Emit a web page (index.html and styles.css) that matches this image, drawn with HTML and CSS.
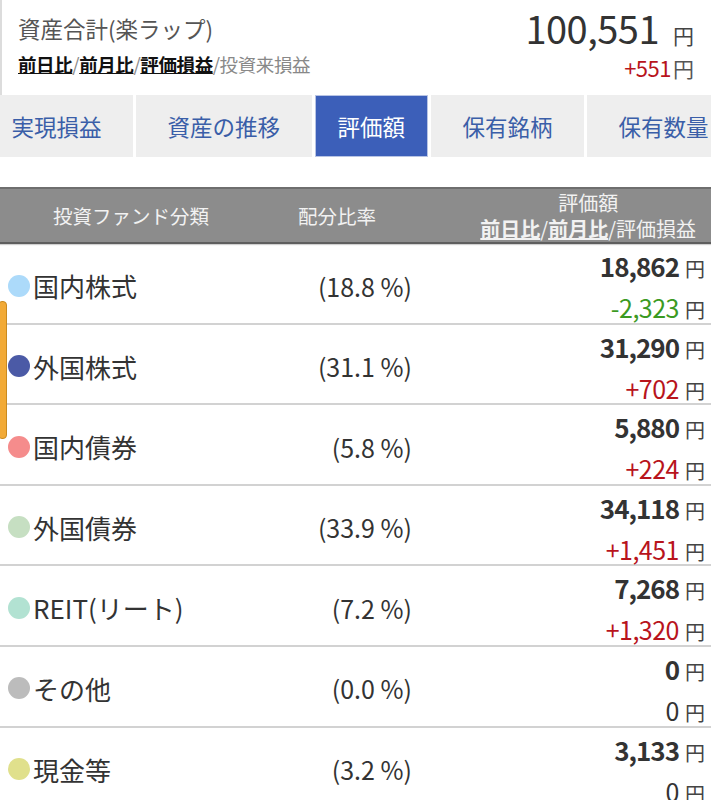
FILE: index.html
```html
<!DOCTYPE html>
<html lang="ja">
<head>
<meta charset="utf-8">
<link rel="stylesheet" href="styles.css">
</head>
<body>
<div class="page">
  <div class="summary">
    <div class="sum-left">
      <div class="sum-title">資産合計(楽ラップ)</div>
      <div class="sum-links"><span class="lk">前日比</span>/<span class="lk">前月比</span>/<span class="lk">評価損益</span>/<span class="muted">投資来損益</span></div>
    </div>
    <div class="sum-right">
      <div class="sum-total"><span class="big">100,551</span><span class="yen-m">円</span></div>
      <div class="sum-diff"><span class="plus">+551</span><span class="yen-s">円</span></div>
    </div>
  </div>

  <div class="tabs">
    <div class="tab first">実現損益</div>
    <div class="tab">資産の推移</div>
    <div class="tab active">評価額</div>
    <div class="tab">保有銘柄</div>
    <div class="tab">保有数量</div>
  </div>

  <div class="thead">
    <div class="th th-name">投資ファンド分類</div>
    <div class="th th-pct">配分比率</div>
    <div class="th th-amt">
      <div class="th-amt-inner">
        <div>評価額</div>
        <div><span class="ul">前日比</span>/<span class="ul">前月比</span>/評価損益</div>
      </div>
    </div>
  </div>

  <div class="rows">
    <div class="row">
      <div class="name"><span class="dot c1"></span>国内株式</div>
      <div class="pct">(18.8 %)</div>
      <div class="amt"><div class="val">18,862<span class="yen">円</span></div><div class="diff minus">-2,323<span class="yen">円</span></div></div>
    </div>
    <div class="row">
      <div class="name"><span class="dot c2"></span>外国株式</div>
      <div class="pct">(31.1 %)</div>
      <div class="amt"><div class="val">31,290<span class="yen">円</span></div><div class="diff plus">+702<span class="yen">円</span></div></div>
    </div>
    <div class="row">
      <div class="name"><span class="dot c3"></span>国内債券</div>
      <div class="pct">(5.8 %)</div>
      <div class="amt"><div class="val">5,880<span class="yen">円</span></div><div class="diff plus">+224<span class="yen">円</span></div></div>
    </div>
    <div class="row">
      <div class="name"><span class="dot c4"></span>外国債券</div>
      <div class="pct">(33.9 %)</div>
      <div class="amt"><div class="val">34,118<span class="yen">円</span></div><div class="diff plus">+1,451<span class="yen">円</span></div></div>
    </div>
    <div class="row">
      <div class="name"><span class="dot c5"></span>REIT(リート)</div>
      <div class="pct">(7.2 %)</div>
      <div class="amt"><div class="val">7,268<span class="yen">円</span></div><div class="diff plus">+1,320<span class="yen">円</span></div></div>
    </div>
    <div class="row">
      <div class="name"><span class="dot c6"></span>その他</div>
      <div class="pct">(0.0 %)</div>
      <div class="amt"><div class="val">0<span class="yen">円</span></div><div class="diff zero">0<span class="yen">円</span></div></div>
    </div>
    <div class="row">
      <div class="name"><span class="dot c7"></span>現金等</div>
      <div class="pct">(3.2 %)</div>
      <div class="amt"><div class="val">3,133<span class="yen">円</span></div><div class="diff zero">0<span class="yen">円</span></div></div>
    </div>
  </div>

  <div class="scrollmark"></div>
</div>
</body>
</html>
```

FILE: styles.css
```css
html, body {
  margin: 0;
  padding: 0;
  background: #fff;
}
body {
  font-family: "Noto Sans CJK JP", "Noto Sans", sans-serif;
  color: #333;
  width: 711px;
  height: 800px;
  overflow: hidden;
}
.page {
  position: relative;
  width: 711px;
}

/* summary */
.summary {
  display: flex;
  justify-content: space-between;
  height: 95px;
  box-sizing: border-box;
  padding: 10px 17px 0 16px;
  border-left: 2px solid #dcdcdc;
}
.sum-title {
  font-size: 22.5px;
  line-height: 36px;
  color: #555;
}
.sum-links {
  font-size: 18.5px;
  line-height: 30px;
  margin-top: 3px;
  color: #888;
  letter-spacing: -0.4px;
}
.sum-links .lk {
  color: #111;
  font-weight: bold;
  text-decoration: underline;
}
.sum-links .muted {
  color: #888;
}
.sum-right {
  text-align: right;
}
.sum-total {
  line-height: 44px;
  margin-top: -4px;
}
.big {
  font-size: 38px;
  color: #333;
  letter-spacing: -0.5px;
}
.yen-m {
  font-size: 21px;
  color: #444;
  margin-left: 14px;
}
.sum-diff {
  line-height: 30px;
  margin-top: -7px;
}
.plus { color: #b8141c; }
.sum-diff .plus {
  font-size: 22px;
  letter-spacing: -0.5px;
}
.yen-s {
  font-size: 21px;
  color: #555;
  margin-left: 2px;
}

/* tabs */
.tabs {
  display: flex;
  gap: 3px;
  overflow: hidden;
  white-space: nowrap;
  height: 62px;
}
.tab {
  flex: none;
  display: flex;
  align-items: center;
  padding: 0 31.5px;
  background: #eeeeee;
  color: #3a5ea8;
  font-size: 22.5px;
}
.tab.first {
  margin-left: -20px;
}
.tab.active {
  background: #3c5fb9;
  color: #fff;
  padding: 0 22px;
  border: 1px solid #b8c4e4;
}

/* table header */
.thead {
  margin-top: 30px;
  display: grid;
  grid-template-columns: 262px 150px 1fr;
  height: 57px;
  box-sizing: border-box;
  background: #8c8c8c;
  border-top: 2px solid #6e6e6e;
  border-bottom: 2px solid #5e5e5e;
  box-shadow: 0 1px 1px #d0d0d0;
  color: #f2f2f2;
  font-size: 19.5px;
}
.th {
  display: flex;
  align-items: center;
  justify-content: center;
}
.th-pct {
  justify-content: flex-start;
  padding-left: 36px;
}
.th-amt {
  justify-content: flex-end;
  padding-right: 15px;
  font-size: 20px;
}
.th-amt-inner {
  text-align: center;
  line-height: 26px;
}
.th-amt-inner .ul {
  font-weight: bold;
  text-decoration: underline;
}

/* rows */
.row {
  display: grid;
  grid-template-columns: 300px 112px 1fr;
  height: 80.6px;
  box-sizing: border-box;
  border-bottom: 2px solid #d2d2d2;
}
.name {
  display: flex;
  align-items: center;
  padding-left: 8px;
  padding-bottom: 2px;
  font-size: 26px;
  color: #333;
}
.dot {
  width: 22px;
  height: 22px;
  border-radius: 50%;
  margin-right: 3px;
  flex: none;
}
.c1 { background: #acdafa; }
.c2 { background: #4b5aa6; }
.c3 { background: #f58c8c; }
.c4 { background: #c6dfc2; }
.c5 { background: #b2e2d2; }
.c6 { background: #bcbcbc; }
.c7 { background: #e0e08c; }
.pct {
  display: flex;
  align-items: center;
  justify-content: flex-end;
  padding-bottom: 2px;
  font-size: 25px;
  color: #333;
}
.amt {
  text-align: right;
  padding-right: 6px;
  padding-top: 3px;
}
.val {
  font-size: 26px;
  font-weight: bold;
  color: #333;
  line-height: 38px;
  letter-spacing: -1px;
}
.diff {
  font-size: 25px;
  line-height: 38px;
  letter-spacing: -0.5px;
}
.minus { color: #3b9a22; }
.zero { color: #333; }
.yen {
  font-size: 20px;
  font-weight: normal;
  color: #444;
  margin-left: 6px;
  letter-spacing: 0;
}

.scrollmark {
  position: absolute;
  left: -2px;
  top: 301px;
  width: 7px;
  height: 136px;
  background: #f2aa36;
  border: 1px solid #c98a20;
  border-radius: 4px;
}
```
